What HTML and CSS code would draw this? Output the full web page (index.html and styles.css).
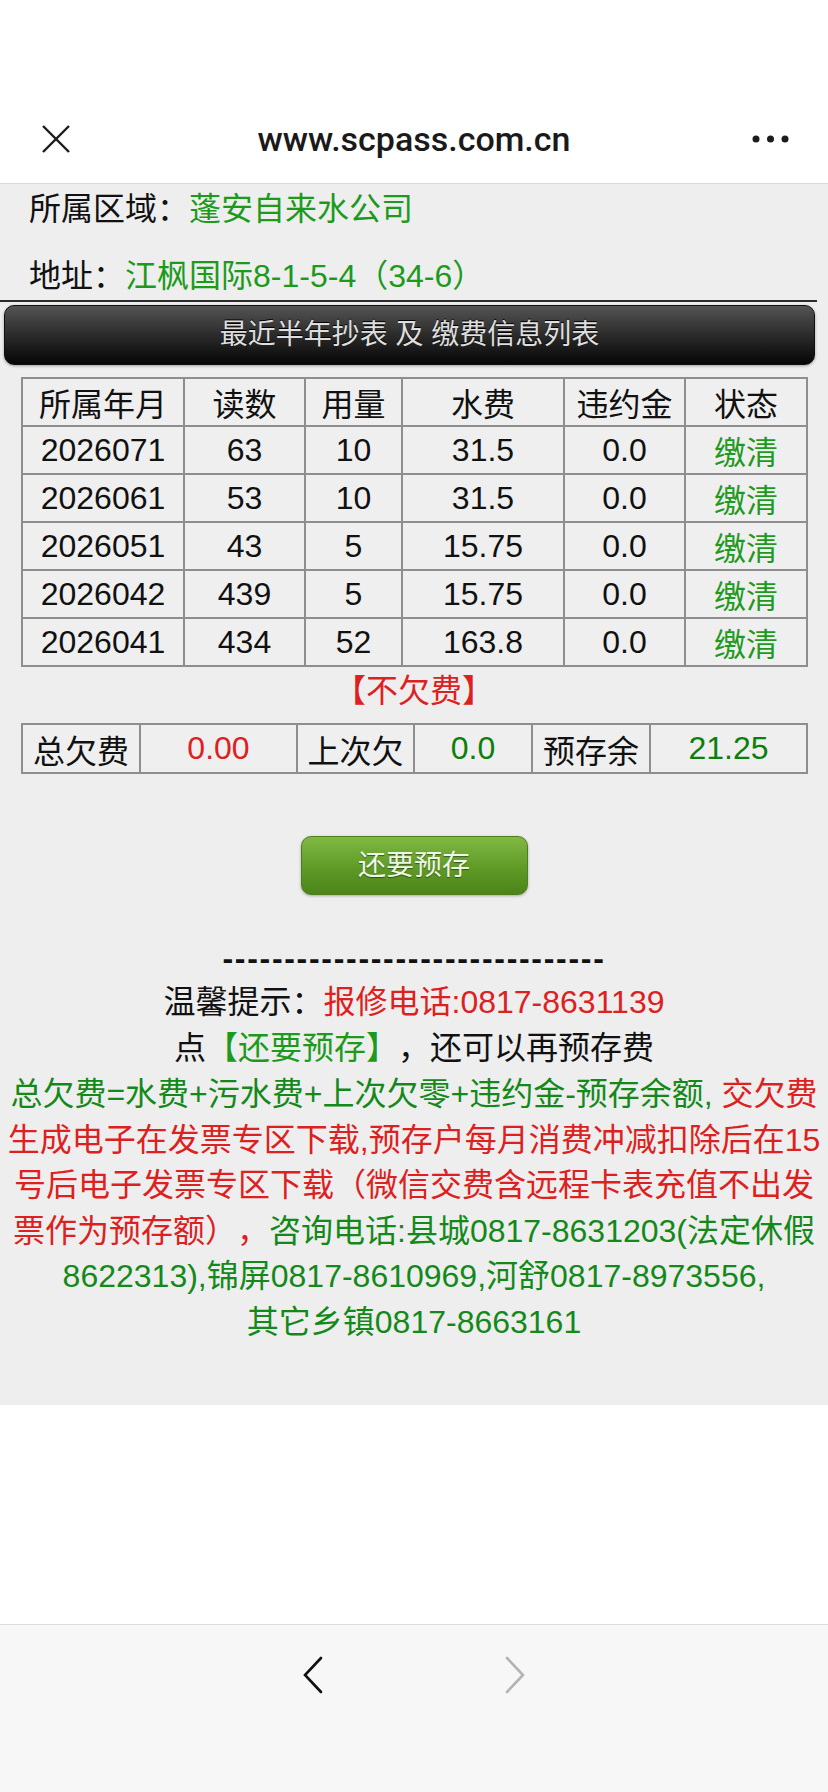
FILE: index.html
```html
<!DOCTYPE html>
<html lang="zh-CN">
<head>
  <meta charset="utf-8">
  <meta name="viewport" content="width=device-width, initial-scale=1">
  <link rel="stylesheet" href="styles.css">
  <title>www.scpass.com.cn</title>
</head>
<body>
  <div class="phone">
    <!-- WeChat top bar -->
    <div class="navbar">
      <div class="nav_left">
        <svg class="close_icon" width="30" height="30" viewBox="0 0 30 30">
          <line x1="2" y1="2" x2="28" y2="28" />
          <line x1="28" y1="2" x2="2" y2="28" />
        </svg>
      </div>
      <div class="nav_title">www.scpass.com.cn</div>
      <div class="nav_right">
        <svg width="40" height="10" viewBox="0 0 40 10">
          <circle cx="4" cy="5" r="3.5" />
          <circle cx="18.5" cy="5" r="3.5" />
          <circle cx="33" cy="5" r="3.5" />
        </svg>
      </div>
    </div>

    <!-- Page -->
    <div class="page">
      <div class="info">
        <div class="info_row">所属区域：<span class="green">蓬安自来水公司</span></div>
        <div class="info_row">地址：<span class="green">江枫国际8-1-5-4（34-6）</span></div>
      </div>

      <div class="bar">最近半年抄表 及 缴费信息列表</div>

      <table class="records">
        <colgroup>
          <col class="c_month"><col class="c_read"><col class="c_use"><col class="c_fee"><col class="c_fine"><col class="c_state">
        </colgroup>
        <tr><td>所属年月</td><td>读数</td><td>用量</td><td>水费</td><td>违约金</td><td>状态</td></tr>
        <tr><td>2026071</td><td>63</td><td>10</td><td>31.5</td><td>0.0</td><td class="paid">缴清</td></tr>
        <tr><td>2026061</td><td>53</td><td>10</td><td>31.5</td><td>0.0</td><td class="paid">缴清</td></tr>
        <tr><td>2026051</td><td>43</td><td>5</td><td>15.75</td><td>0.0</td><td class="paid">缴清</td></tr>
        <tr><td>2026042</td><td>439</td><td>5</td><td>15.75</td><td>0.0</td><td class="paid">缴清</td></tr>
        <tr><td>2026041</td><td>434</td><td>52</td><td>163.8</td><td>0.0</td><td class="paid">缴清</td></tr>
      </table>

      <div class="arrears">【不欠费】</div>

      <table class="summary">
        <colgroup>
          <col class="s_lbl1"><col class="s_val1"><col class="s_lbl2"><col class="s_val2"><col class="s_lbl3"><col class="s_val3">
        </colgroup>
        <tr>
          <td>总欠费</td><td class="red">0.00</td>
          <td>上次欠</td><td class="dark_green">0.0</td>
          <td>预存余</td><td class="dark_green">21.25</td>
        </tr>
      </table>

      <a class="btn" href="#">还要预存</a>

      <div class="tips">
        <div class="dashes">-------------------------------</div>
        <div class="tip_line">温馨提示：<span class="red">报修电话:0817-8631139</span></div>
        <div class="tip_line tip_click">点<span class="green">【还要预存】</span>，还可以再预存费</div>
        <div class="notice">
          <span class="tip_green">总欠费=水费+污水费+上次欠零+违约金-预存余额, </span><span class="red">交欠费生成电子在发票专区下载,预存户每月消费冲减扣除后在15号后电子发票专区下载（微信交费含远程卡表充值不出发票作为预存额），</span><span class="tip_green">咨询电话:县城0817-8631203(法定休假8622313),锦屏0817-8610969,河舒0817-8973556,<br>其它乡镇0817-8663161</span>
        </div>
      </div>
    </div>

    <div class="blank"></div>

    <!-- WeChat bottom toolbar -->
    <div class="toolbar">
      <svg class="chev" width="22" height="38" viewBox="0 0 22 38">
        <polyline points="19,2 3,19 19,36" />
      </svg>
      <svg class="chev chev_off" width="22" height="38" viewBox="0 0 22 38">
        <polyline points="3,2 19,19 3,36" />
      </svg>
    </div>
  </div>
</body>
</html>
```

FILE: styles.css
```css
body {
  margin: 0px;
  background-color: white;
  font-family: "Liberation Sans", "Noto Sans CJK SC", sans-serif;
  color: #111;
  text-spacing-trim: space-all;
}

.phone {
  width: 828px;
  height: 1792px;
  display: flex;
  flex-direction: column;
}

/* top bar */
.navbar {
  height: 88px;
  padding-top: 95px;
  border-bottom: 1px solid #d9d9d9;
  display: grid;
  grid-template-columns: 120px 1fr 120px;
  align-items: center;
  background-color: white;
}

.nav_left {
  padding-left: 41px;
  display: flex;
}

.close_icon line {
  stroke: #1c1c1c;
  stroke-width: 2.4;
}

.nav_title {
  text-align: center;
  font-family: Roboto, "Liberation Sans", sans-serif;
  font-weight: 500;
  font-size: 34px;
  color: #1a1a1a;
}

.nav_right {
  display: flex;
  justify-content: flex-end;
  padding-right: 36px;
}

.nav_right circle {
  fill: #1c1c1c;
}

/* page */
.page {
  background-color: #eeeeee;
  padding-bottom: 59px;
  font-size: 32px;
}

.green {
  color: #1c9a1c;
}

.dark_green {
  color: #0a800a;
}

.red {
  color: #dd2020;
}

.info {
  padding: 1px 0 0 29px;
  margin-right: 11px;
  border-bottom: 2px solid #2b2b2b;
}

.info_row {
  line-height: 48px;
}

.info_row + .info_row {
  margin-top: 19px;
}

.bar {
  margin: 3px 13px 0 4px;
  height: 58px;
  border: 1px solid #111;
  border-radius: 10px;
  background: linear-gradient(#545454, #2b2b2b 50%, #060606);
  box-shadow: 0 1px 3px rgba(0, 0, 0, 0.35);
  color: #dedede;
  font-size: 28px;
  line-height: 58px;
  text-align: center;
  text-shadow: 0 -1px 0 #000;
}

/* tables */
table {
  border-collapse: collapse;
  margin-left: 21px;
  width: 785px;
  table-layout: fixed;
}

td {
  border: 2px solid #8e8e8e;
  padding: 0;
  text-align: center;
  background-color: #efefef;
}

.records {
  margin-top: 12px;
}

.records td {
  height: 46px;
}

.c_month { width: 162px; }
.c_read { width: 121px; }
.c_use { width: 97px; }
.c_fee { width: 162px; }
.c_fine { width: 121px; }
.c_state { width: 122px; }

.paid {
  color: #1f9a1f;
}

.arrears {
  color: #dd2020;
  text-align: center;
  line-height: 48px;
}

.summary {
  margin-top: 8px;
}

.summary td {
  height: 47px;
}

.s_lbl1 { width: 118px; }
.s_val1 { width: 157px; }
.s_lbl2 { width: 117px; }
.s_val2 { width: 118px; }
.s_lbl3 { width: 118px; }
.s_val3 { width: 157px; }

/* button */
.btn {
  display: block;
  width: 225px;
  height: 57px;
  margin: 62px auto 0;
  border: 1px solid #4e7e1d;
  border-radius: 10px;
  background: linear-gradient(#80b843, #5f9a27 55%, #4b8418);
  box-shadow: 0 1px 3px rgba(0, 0, 0, 0.3);
  color: #eef7e4;
  font-size: 28px;
  line-height: 57px;
  text-align: center;
  text-decoration: none;
  text-shadow: 0 1px 1px rgba(0, 0, 0, 0.45);
}

/* tips */
.tips {
  margin-top: 41px;
  text-align: center;
}

.dashes {
  line-height: 44px;
  letter-spacing: 1.7px;
  font-weight: bold;
}

.tip_line {
  line-height: 44px;
}

.tip_click {
  line-height: 48px;
}

.notice {
  line-height: 45.6px;
}

.tip_green {
  color: #13891a;
}

.blank {
  flex: 1;
  background-color: white;
}

/* bottom toolbar */
.toolbar {
  height: 136px;
  padding-top: 31px;
  border-top: 1px solid #dcdcdc;
  background-color: #f7f7f7;
  display: flex;
  justify-content: center;
  align-items: flex-start;
  gap: 180px;
}

.chev polyline {
  fill: none;
  stroke: #111;
  stroke-width: 2.6;
  stroke-linecap: round;
}

.chev_off polyline {
  stroke: #b3b3b3;
}
```
